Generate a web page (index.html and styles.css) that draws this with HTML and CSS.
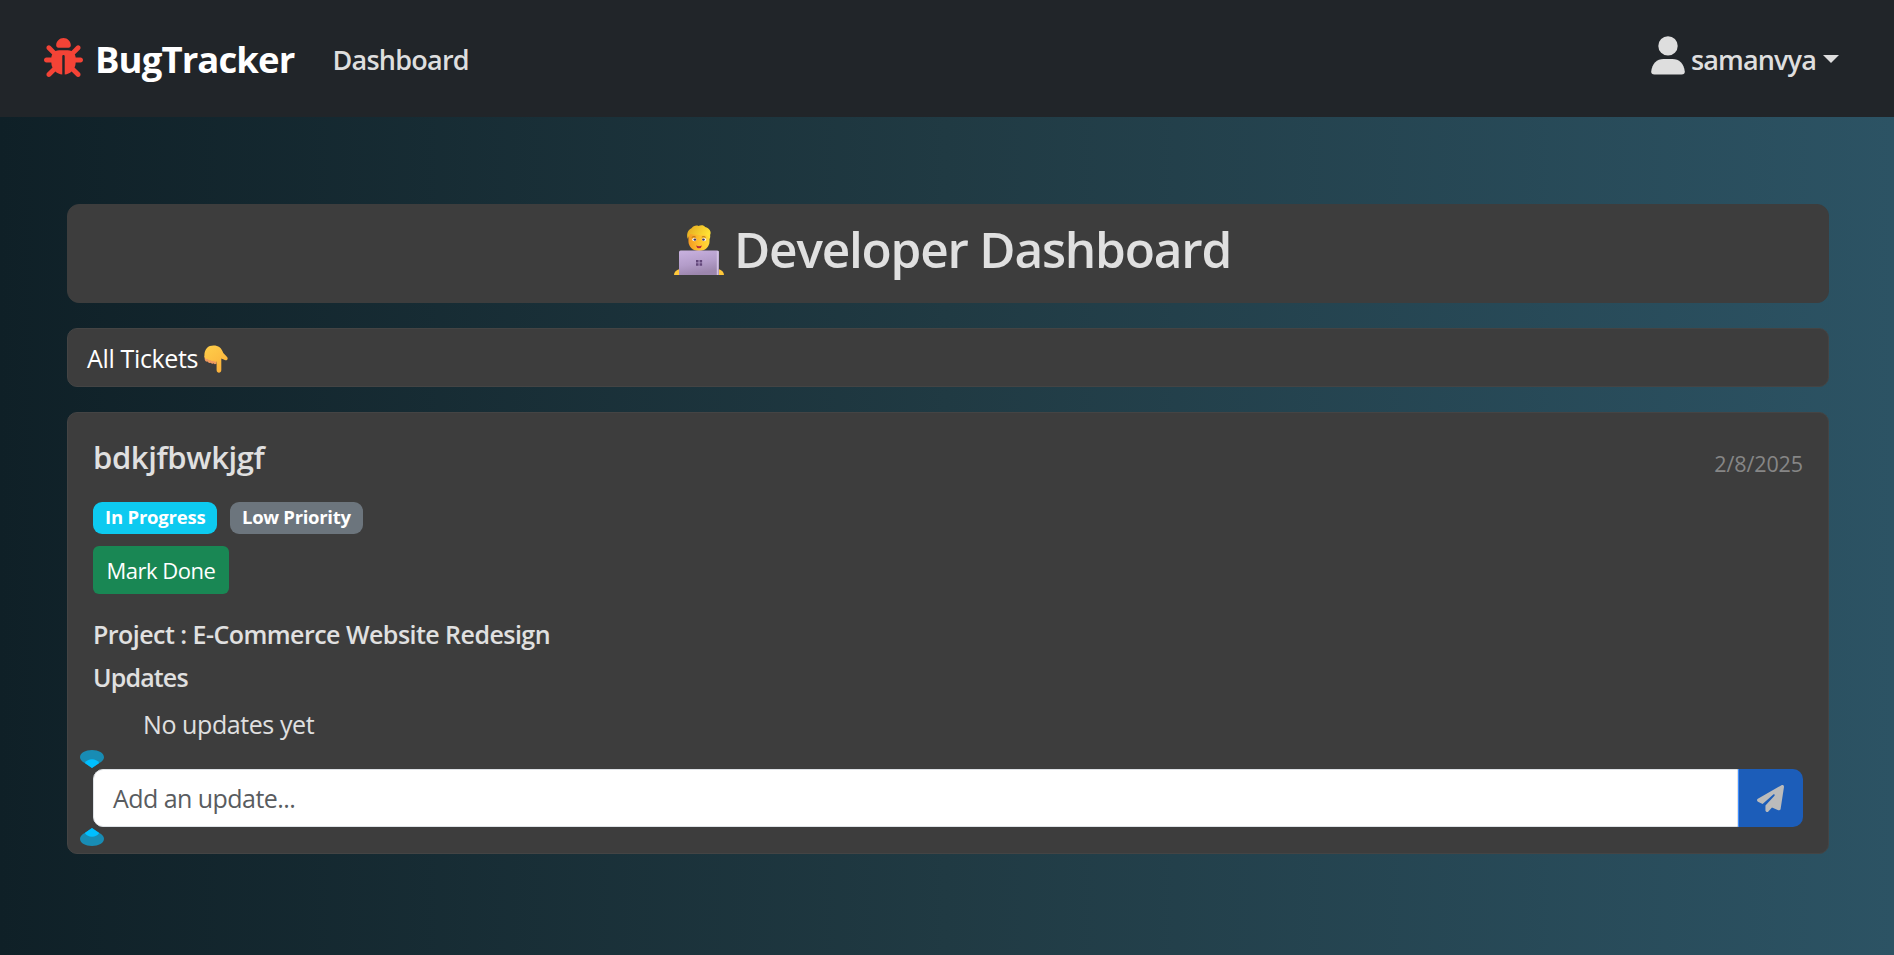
FILE: index.html
```
<!DOCTYPE html>
<html lang="en">
<head>
<meta charset="utf-8">
<title>BugTracker</title>
<link rel="stylesheet" href="styles.css">
</head>
<body>
<nav class="navbar">
  <a class="brand">
    <svg class="brand-icon" viewBox="0 0 512 512"><path fill="#f44336" d="M256 0c53 0 96 43 96 96v3.600c0 15.700-12.700 28.400-28.400 28.400H188.400c-15.700 0-28.400-12.700-28.400-28.400V96c0-53 43-96 96-96zM41.400 105.400c12.500-12.500 32.800-12.500 45.300 0l64 64c.7.7 1.300 1.400 1.900 2.100 14.200-7.300 30.400-11.400 47.500-11.400H312c17.100 0 33.200 4.100 47.500 11.400.6-.7 1.200-1.400 1.900-2.100l64-64c12.500-12.500 32.800-12.500 45.300 0s12.500 32.800 0 45.300l-64 64c-.7.7-1.400 1.300-2.100 1.900 6.200 12 10.100 25.300 11.100 39.500H480c17.700 0 32 14.300 32 32s-14.300 32-32 32h-64c0 24.600-5.500 47.800-15.400 68.600 2.200 1.300 4.200 2.900 6 4.800l64 64c12.500 12.500 12.500 32.800 0 45.300s-32.800 12.500-45.300 0l-63.100-63.100c-24.500 21.800-55.800 36.200-90.300 39.600V240c0-8.800-7.200-16-16-16s-16 7.200-16 16v239.200c-34.500-3.400-65.800-17.800-90.300-39.600l-62.900 63c-12.500 12.500-32.800 12.500-45.300 0s-12.500-32.800 0-45.300l64-64c1.900-1.900 3.900-3.400 6-4.800C101.500 367.800 96 344.600 96 320H32c-17.700 0-32-14.300-32-32s14.300-32 32-32h64.300c1.100-14.100 5-27.500 11.100-39.500-.7-.6-1.400-1.200-2.100-1.900l-64-64c-12.500-12.500-12.500-32.800 0-45.300z"/></svg>
    <span class="brand-name">BugTracker</span>
  </a>
  <a class="nav-link">Dashboard</a>
  <a class="user">
    <svg class="user-icon" viewBox="0 0 34 39"><circle cx="17" cy="9.900" r="9.700"/><path d="M3.500 38.500Q0 38.500.2 35.500C1 27.500 6 23 12.500 23h9C28 23 33 27.500 33.800 35.500q.2 3-3.300 3z"/></svg>
    <span class="user-name">samanvya</span>
    <i class="caret"></i>
  </a>
</nav>
<main class="page">
  <header class="panel title-panel">
    <svg class="dev-icon" viewBox="0 0 45 50" preserveAspectRatio="none">
      <defs>
        <linearGradient id="face" x1="0" x2="1"><stop offset="0" stop-color="#f59a23"/><stop offset=".6" stop-color="#ffc62e"/><stop offset="1" stop-color="#ffd93b"/></linearGradient>
        <linearGradient id="hair" x1="0" x2="1" y2=".4"><stop offset="0" stop-color="#e3a51f"/><stop offset="1" stop-color="#ffe234"/></linearGradient>
        <linearGradient id="lid" x2=".3" y2="1"><stop offset="0" stop-color="#c9b2e0"/><stop offset=".6" stop-color="#b39cc9"/><stop offset="1" stop-color="#9c86ad"/></linearGradient>
      </defs>
      <path fill="url(#face)" d="M13 8h19v8c0 6-4 10-9.500 10S13 22 13 16z"/>
      <path fill="url(#hair)" d="M12.500 14C11 10 12 5 16 3c1-2 4-3 6-2 2-1 5-1 6 1 4 1 6 5 4.500 8 .3 1.500 0 3-.5 4-1-2-2-3.500-4-4.500-5 1-11 0-13-.5-1 1-1.800 2.500-2.500 4.500z"/>
      <path fill="none" stroke="#b06a15" stroke-width=".9" d="M16 12.300q2-1.300 3.500-.3M25 12q2-1 3.500.3"/>
      <ellipse cx="18.300" cy="14.600" rx="1.900" ry="1.600" fill="#fff"/><ellipse cx="27" cy="14.600" rx="1.900" ry="1.600" fill="#fff"/>
      <circle cx="18.800" cy="14.600" r="1.200" fill="#4a3550"/><circle cx="26.500" cy="14.600" r="1.200" fill="#4a3550"/>
      <path fill="#b8283c" d="M19.800 20.500q2.700 1.500 5.400 0-.6 2.700-2.700 2.700t-2.700-2.700z"/>
      <path fill="#ffc83a" d="M0 50c0-3 2-5 5-6v6zM45 50c0-3-2-5-5-6v6z"/>
      <path fill="url(#lid)" d="M6 25.500h33q1.500 0 1.500 1.500v23h-36V27q0-1.500 1.500-1.500z"/>
      <path fill="#d2c2e2" d="M38.500 26h1.500v24h-1.500z"/>
      <path fill="#62467a" d="M19.800 35h2.300v2.500h-2.300zM23 35h2.300v2.500H23zM19.800 38.300h2.300v2.500h-2.300zM23 38.300h2.300v2.500H23z"/>
    </svg>
    <h1 class="title">Developer Dashboard</h1>
  </header>
  <section class="panel tickets-panel">
    <span class="tickets-label">All Tickets</span>
    <svg class="point-icon" viewBox="0 0 24 28">
      <defs><linearGradient id="hand" x2=".6" y2="1"><stop offset="0" stop-color="#ffcf4a"/><stop offset="1" stop-color="#fbb23c"/></linearGradient></defs>
      <path fill="#f09a5f" d="M.6 11h12v7.500q-2 1.500-3-.3-1.600 1.300-2.800-.4-2 1-3-1.200Q.5 17 .6 13z"/>
      <path fill="url(#hand)" d="M.4 12C0 4 4 .6 9.500.6c5 0 8 2.400 9.800 7.400l3.800 4c1.500 2-.3 4-2.300 3l-3.500-1.500V25c0 3.500-4.700 3.500-4.700 0v-8.500q-2 1-3.300-.8-1.600 1-3-.7-1.600.8-2.900-1.200Q1.800 15 .4 12z"/>
    </svg>
  </section>
  <section class="panel ticket">
    <div class="ticket-head">
      <h2 class="ticket-name">bdkjfbwkjgf</h2>
      <span class="date">2/8/2025</span>
    </div>
    <div class="badges">
      <span class="badge status">In Progress</span>
      <span class="badge priority">Low Priority</span>
    </div>
    <button class="done">Mark Done</button>
    <p class="line project">Project : E-Commerce Website Redesign</p>
    <p class="line updates">Updates</p>
    <p class="line empty">No updates yet</p>
    <form class="update-form">
      <svg class="marker marker-top" viewBox="0 0 24 18"><path fill="#188cb4" d="M12 0c6.600 0 12 3 12 7.200 0 2.300-2 4.300-5 6L12 18l-7-4.800C2 11.500 0 9.500 0 7.200 0 3 5.400 0 12 0z"/><path fill="#00bfff" d="M4.800 13C6.500 10.400 9 9.200 12 9.200s5.500 1.200 7.200 3.800L12 18z"/></svg>
      <div class="field">Add an update...</div>
      <button class="send" type="button"><svg class="send-icon" viewBox="0 0 512 512"><path fill="#bbb" d="M498.100 5.600c10.100 7 15.400 19.100 13.500 31.200l-64 416c-1.500 9.700-7.400 18.200-16 23s-18.900 5.400-28 1.600L284 427.700l-68.500 74.100c-8.900 9.700-22.900 12.900-35.200 8.100S160 493.200 160 480V396.400c0-4 1.500-7.800 4.200-10.700L331.800 202.800c5.800-6.300 5.600-16-.4-22s-15.700-6.400-22-.7L106 360.800 17.700 316.600C7.100 311.300.3 300.700 0 288.900s5.900-22.800 16.100-28.700l448-256c10.700-6.100 23.900-5.500 34 1.400z"/></svg></button>
      <svg class="marker marker-bottom" viewBox="0 0 24 18"><path fill="#188cb4" d="M12 0c6.600 0 12 3 12 7.200 0 2.300-2 4.300-5 6L12 18l-7-4.800C2 11.500 0 9.500 0 7.200 0 3 5.400 0 12 0z"/><path fill="#00bfff" d="M4.800 13C6.500 10.400 9 9.200 12 9.200s5.500 1.200 7.200 3.800L12 18z"/></svg>
    </form>
  </section>
</main>
</body>
</html>
```
FILE: styles.css
```
* { box-sizing: border-box; }
body {
  margin: 0;
  min-height: 955px;
  font-family: "Open Sans", "Noto Sans", sans-serif;
  font-size: 25px;
  color: #e0e0e0;
  white-space: nowrap;
  background: linear-gradient(to right, #0f2027, #203a43, #2c5364);
}
h1, h2, p { margin: 0; }
button { border: 0; font-family: inherit; }
svg { display: block; flex: none; }

.navbar {
  display: flex;
  align-items: center;
  height: 117px;
  padding: 0 55px 0 44px;
  background: #212529;
}
.brand { display: flex; align-items: center; gap: 12px; }
.brand-icon { width: 39px; height: 39px; margin-bottom: 2px; }
.brand-name { font-size: 36.500px; font-weight: 700; letter-spacing: -0.9px; color: #fff; }
.nav-link { margin-left: 38px; padding-top: 2px; font-size: 27px; font-weight: 600; letter-spacing: -0.75px; color: #dedede; }
.user { display: flex; align-items: center; margin-left: auto; font-size: 27px; font-weight: 600; letter-spacing: -0.850px; color: #dedede; }
.user-icon { width: 34px; height: 39px; margin: 0 6px 7px 0; fill: #dedede; }
.user-name { padding-top: 2px; }
.caret { margin-left: 7px; border: 8px solid transparent; border-top-color: #dedede; border-bottom: 0; }

.page { padding: 87px 65px 0 67px; }
.panel { background: #3d3d3d; border: 1px solid #444; border-radius: 10px; }
.title-panel { display: flex; justify-content: center; height: 99px; padding: 14px 0 0 9px; border-color: #3d3d3d; border-radius: 12px; }
.dev-icon { width: 50px; height: 50px; margin: 6px 10px 0 0; }
.title { font-size: 49.500px; line-height: 60px; font-weight: 600; letter-spacing: -1.200px; }
.tickets-panel { display: flex; align-items: center; height: 59px; margin: 25px 0; padding-left: 19px; color: #fff; }
.tickets-label { letter-spacing: -0.35px; }
.point-icon { width: 24px; height: 28px; margin: 3px 0 0 6px; }

.ticket { height: 442px; padding: 24px 25px 0; }
.ticket-head { display: flex; justify-content: space-between; height: 40px; line-height: 40px; }
.ticket-name { font-size: 31px; font-weight: 600; letter-spacing: -0.38px; }
.date { padding-top: 7px; font-size: 21.500px; letter-spacing: -0.1px; color: #868686; }
.badges { display: flex; gap: 13px; margin: 25px 0 12px; }
.badge { height: 32px; padding-left: 12px; border-radius: 9px; line-height: 30px; font-size: 18.500px; font-weight: 700; color: #fff; }
.status { width: 124px; background: #0dcaf0; letter-spacing: -0.2px; }
.priority { width: 133px; background: #6c757d; letter-spacing: -0.3px; }
.done { display: block; width: 136px; height: 48px; padding: 0; border-radius: 6px; background: #198754; color: #fff; font-size: 22px; letter-spacing: -0.5px; }
.line { line-height: 30px; }
.project { margin-top: 25px; font-weight: 600; letter-spacing: -0.54px; }
.updates { margin-top: 13px; font-weight: 600; letter-spacing: -0.85px; }
.empty { margin-top: 17px; padding-left: 50px; letter-spacing: -0.42px; }
.update-form { position: relative; display: flex; height: 58px; margin-top: 30px; }
.field { flex: 1; padding-left: 19px; border: 1px solid #dee2e6; border-radius: 10px 0 0 10px; background: #fff; color: #595c5f; line-height: 57px; letter-spacing: -0.55px; }
.send { display: flex; align-items: center; justify-content: center; width: 65px; padding: 0; border-left: 1px solid #3d8bfd; border-radius: 0 10px 10px 0; background: #1c5db9; }
.send-icon { width: 27px; height: 27px; margin-right: 1px; }
.marker { position: absolute; left: -13px; width: 24px; height: 18px; }
.marker-top { top: -19px; }
.marker-bottom { bottom: -19px; transform: scaleY(-1); }
```
